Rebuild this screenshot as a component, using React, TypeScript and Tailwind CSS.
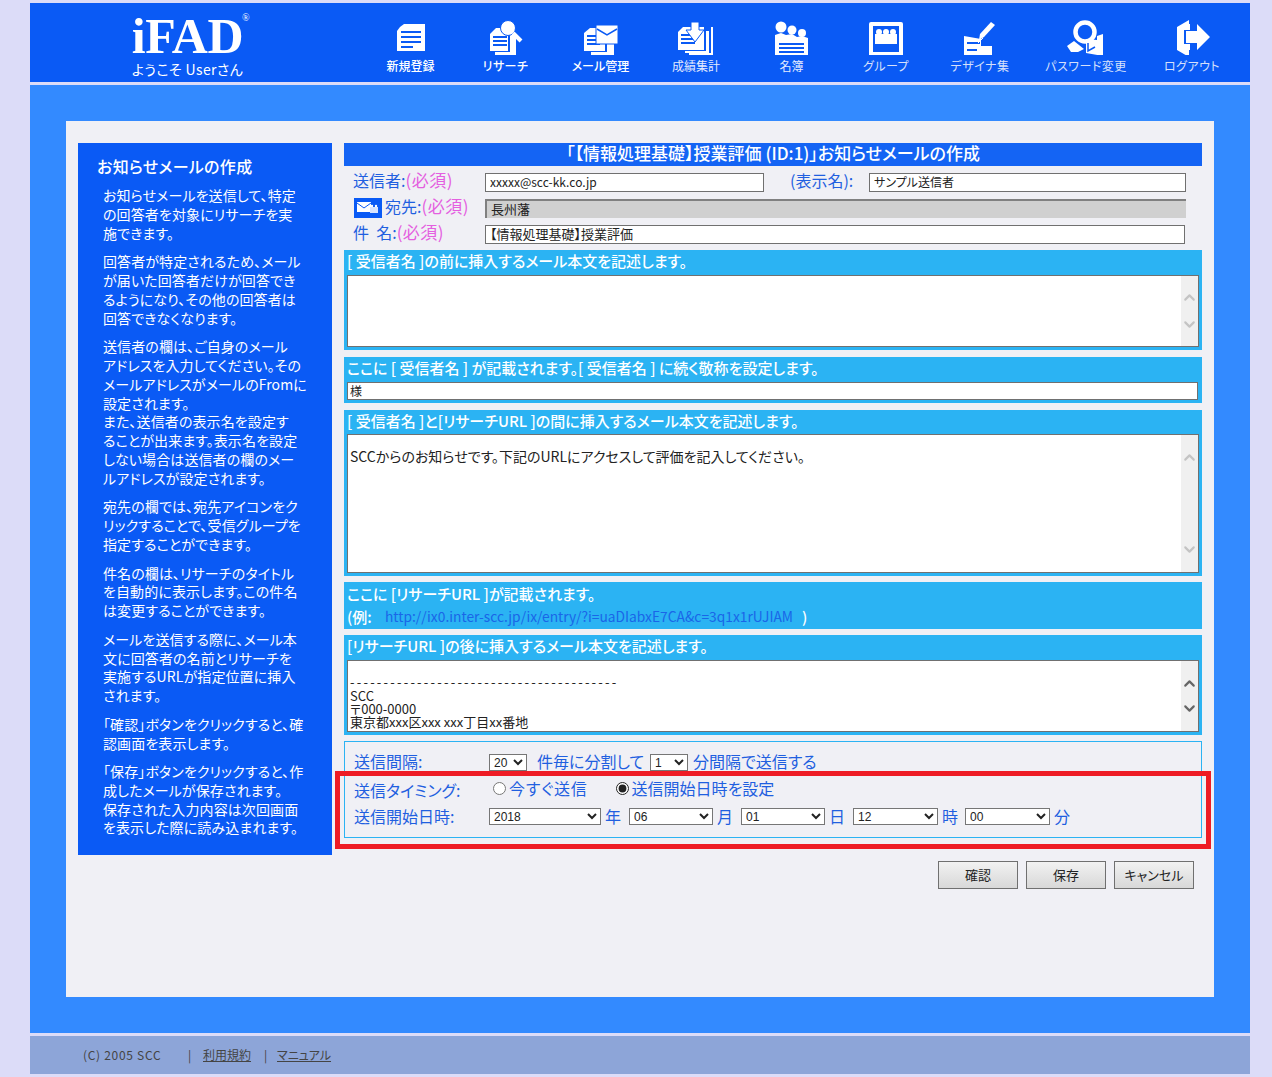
import React from "react";
import { ChevronUp, ChevronDown } from "lucide-react";

const font = { fontFamily: '"Noto Sans CJK JP", "Liberation Sans", sans-serif', fontFeatureSettings: '"palt"' };

const W = "#ffffff";
const B = "#0a5af5";

function Ic({ children }: { children: React.ReactNode }) {
  return (
    <svg width="44" height="36" viewBox="0 0 44 36" className="block">
      {children}
    </svg>
  );
}

const lines = (x: number, w: number, ys: number[], c = B, h = 2) =>
  ys.map((y) => <rect key={y} x={x} y={y} width={w} height={h} fill={c} />);

const icons: React.ReactNode[] = [
  <Ic>
    <path d="M11 8L15 5H36V32H8V12Z" fill={W} />
    {lines(12, 20, [12, 17, 22])}
    {lines(12, 12, [27])}
  </Ic>,
  <Ic>
    <path d="M6 15L12 9H24V32H6Z" fill={W} />
    <path d="M26 14H32V36H11V33H26Z" fill={W} />
    {lines(9, 14, [17, 21, 25])}
    <circle cx="24" cy="9" r="7.500" fill={W} stroke={B} strokeWidth="1" />
    <path d="M29 14L37 22" stroke={W} strokeWidth="4" />
  </Ic>,
  <Ic>
    <path d="M5 14L11 9H26V32H5Z" fill={W} />
    <path d="M28 20H35V36H12V33H28Z" fill={W} />
    {lines(8, 13, [16, 20, 24])}
    <rect x="17" y="6" width="22" height="19" fill={W} stroke={B} strokeWidth="1" />
    <path d="M18 10L28 16L38 10" fill="none" stroke={B} strokeWidth="1.500" />
  </Ic>,
  <Ic>
    <path d="M4 13L9 8H30V31H4Z" fill={W} />
    <path d="M32 12H35V34H11V32H32Z" fill={W} />
    <path d="M37 8H39V36H15V34H37Z" fill={W} />
    {lines(7, 14, [15, 19, 23])}
    <path d="M17 3H25V11H30L21 23L12 11H17Z" fill={W} stroke={B} strokeWidth="1" />
  </Ic>,
  <Ic>
    <circle cx="11" cy="8" r="5.500" fill={W} />
    <circle cx="22" cy="11" r="4.500" fill={W} />
    <circle cx="32" cy="14" r="4" fill={W} />
    <path d="M5 16L11 14L16 16L22 15L27 18L32 17L38 19V37H5Z" fill={W} />
    {lines(9, 25, [24, 28, 32])}
  </Ic>,
  <Ic>
    <rect x="5" y="3" width="34" height="35" rx="2" fill={W} />
    <rect x="9" y="7" width="26" height="26" fill={B} />
    <path d="M11 15H33V25H11Z" fill={W} />
    <circle cx="15" cy="13" r="3" fill={W} />
    <circle cx="22" cy="13" r="3" fill={W} />
    <circle cx="29" cy="13" r="3" fill={W} />
  </Ic>,
  <Ic>
    <path d="M6 17L23 20V27H34V36H6Z" fill={W} />
    {lines(9, 13, [23])}
    {lines(9, 10, [30])}
    <path d="M21 21L22 15L33 3L37 6L26 18Z" fill={W} />
    <path d="M20 24L25 19" stroke={W} strokeWidth="1" />
  </Ic>,
  <Ic>
    <circle cx="21" cy="13" r="9.500" fill="none" stroke={W} strokeWidth="4.500" />
    <path d="M3 27L10 22L20 30L14 33H7Z" fill={W} />
    <path d="M22 20V34L39 37V15L33 17V21Z" fill={W} />
    <path d="M24 24L24 32L31 28" stroke={B} strokeWidth="1.500" fill="none" />
  </Ic>,
  <Ic>
    <path d="M7 8L19 1V5H20V11H14V25H20V31H19V38L7 31Z" fill={W} />
    <path d="M16 12H27V5L40 18L27 31V24H16Z" fill={W} />
  </Ic>,
];

const nav = [
  { label: "新規登録", w: "w-[95px]", t: "text-white font-medium" },
  { label: "リサーチ", w: "w-[95px]", t: "text-white font-medium tracking-[0.4px]" },
  { label: "メール管理", w: "w-[95px]", t: "text-white font-medium" },
  { label: "成績集計", w: "w-[96px]", t: "text-[#e4ebff]" },
  { label: "名簿", w: "w-[95px]", t: "text-[#e4ebff]" },
  { label: "グループ", w: "w-[94px]", t: "text-[#d6e0fb] tracking-[0.5px]" },
  { label: "デザイナ集", w: "w-[94px]", t: "text-[#d6e0fb] tracking-[0.5px]" },
  { label: "パスワード変更", w: "w-[118px]", t: "text-[#d6e0fb] tracking-[0.5px]" },
  { label: "ログアウト", w: "w-[94px]", t: "text-[#d6e0fb] tracking-[0.5px]" },
];

const help: string[][] = [
  ["お知らせメールを送信して、特定", "の回答者を対象にリサーチを実", "施できます。"],
  ["回答者が特定されるため、メール", "が届いた回答者だけが回答でき", "るようになり、その他の回答者は", "回答できなくなります。"],
  ["送信者の欄は、ご自身のメール", "アドレスを入力してください。その", "メールアドレスがメールのFromに", "設定されます。", "また、送信者の表示名を設定す", "ることが出来ます。表示名を設定", "しない場合は送信者の欄のメー", "ルアドレスが設定されます。"],
  ["宛先の欄では、宛先アイコンをク", "リックすることで、受信グループを", "指定することができます。"],
  ["件名の欄は、リサーチのタイトル", "を自動的に表示します。この件名", "は変更することができます。"],
  ["メールを送信する際に、メール本", "文に回答者の名前とリサーチを", "実施するURLが指定位置に挿入", "されます。"],
  ["「確認」ボタンをクリックすると、確", "認画面を表示します。"],
  ["「保存」ボタンをクリックすると、作", "成したメールが保存されます。", "保存された入力内容は次回画面", "を表示した際に読み込まれます。"],
];

function Req() {
  return <span className="text-[#e45fe0] text-[17px] tracking-[0.5px]">(必須)</span>;
}

function Scroll({ dark, hClass }: { dark?: boolean; hClass: string }) {
  const c = dark ? "text-[#666666]" : "text-[#c4c4c4]";
  return (
    <div className={`w-[17px] bg-[#f0f0f0] flex flex-col items-center justify-between ${hClass}`}>
      <ChevronUp size={17} strokeWidth={3} className={c} />
      <ChevronDown size={17} strokeWidth={3} className={c} />
    </div>
  );
}

function Sel({ v, w }: { v: string; w: string }) {
  return (
    <select
      defaultValue={v}
      className={`${w} h-[17px] bg-white border border-[#767676] text-[12px] leading-[14px] text-[#222222] rounded-none`}
      style={{ fontFamily: '"Liberation Sans", sans-serif' }}
    >
      <option value={v}>{v}</option>
    </select>
  );
}

function Btn({ label }: { label: string }) {
  return (
    <button className="w-[80px] h-[28px] border border-[#707070] bg-gradient-to-b from-[#f2f2f2] to-[#d8d8d8] text-[13px] text-[#222222]">
      {label}
    </button>
  );
}

export default function App() {
  return (
    <div className="min-h-[1077px] bg-[#dcdcf8] px-[30px] pt-[3px]" style={font}>
      <div className="w-[1220px]">
        <header className="h-[79px] bg-[#0a5af5] flex text-white">
          <div className="w-[333px] flex flex-col items-center pr-[18px] relative">
            <div
              className="text-[50px] leading-[42px] font-bold mt-[12px] tracking-[-0.3px] relative"
              style={{ fontFamily: '"Liberation Serif", serif' }}
            >
              iFAD
              <span className="absolute right-[-6px] top-[-2px] text-[10px] leading-[10px] font-normal">®</span>
            </div>
            <div className="text-[14px] leading-[16px] mt-[4px] whitespace-nowrap tracking-[0.4px]">ようこそ Userさん</div>
          </div>
          <nav className="flex">
            {nav.map((n, i) => (
              <div key={n.label} className={`${n.w} flex flex-col items-center pt-[16px]`}>
                {icons[i]}
                <span className={`${n.t} text-[12px] leading-[16px] mt-[3px] whitespace-nowrap`}>{n.label}</span>
              </div>
            ))}
          </nav>
        </header>

        <main className="mt-[3px] h-[948px] bg-[#338aff] pt-[36px] px-[36px]">
          <div className="relative h-[876px] bg-[#f0f0f5] pt-[22px] px-[12px] flex gap-[12px] items-start">
            <aside className="w-[254px] h-[712px] bg-[#0a5af5] text-white pl-[19px] pt-[12px] shrink-0">
              <h2 className="text-[16px] leading-[22px] font-medium tracking-[0.3px]">お知らせメールの作成</h2>
              <div className="pl-[6px] mt-[9px] text-[14px] leading-[18.8px] whitespace-nowrap tracking-[0.1px]">
                {help.map((p, i) => (
                  <p key={i} className="mb-[9.800px]">
                    {p.map((l, j) => (
                      <span key={j} className="block">{l}</span>
                    ))}
                  </p>
                ))}
              </div>
            </aside>

            <section className="w-[858px]">
              <h1 className="h-[23px] bg-[#1464f4] text-white text-center text-[17px] leading-[19px] font-medium">
                「【情報処理基礎】授業評価 (ID:1)」お知らせメールの作成
              </h1>

              <div className="text-[#1f5fe0] text-[16px] leading-[22px]">
                <div className="flex items-center h-[26px] mt-[3px]">
                  <div className="w-[141px] pl-[9px] pb-[5px] whitespace-nowrap">送信者:<Req /></div>
                  <input readOnly value="xxxxx@scc-kk.co.jp" className="w-[279px] h-[19px] bg-white border border-[#707070] text-[12px] px-[4px] text-[#222222]" />
                  <div className="w-[105px] pl-[26px] pb-[5px] whitespace-nowrap">(表示名):</div>
                  <input readOnly value="サンプル送信者" className="w-[317px] h-[19px] bg-white border border-[#707070] text-[12px] px-[4px] text-[#222222]" />
                </div>
                <div className="flex items-center h-[26px]">
                  <div className="w-[141px] pl-[10px] flex items-center gap-[3px] whitespace-nowrap">
                    <span className="w-[28px] h-[20px] bg-[#0a5af5] flex items-center justify-center">
                      <svg width="22" height="12" viewBox="0 0 22 12">
                        <rect x="0" y="0" width="14" height="10" fill="#ffffff" />
                        <path d="M0 1L7 6L14 1" stroke="#0a5af5" fill="none" />
                        <rect x="13" y="5" width="8" height="6" fill="#d8e4ff" />
                        <circle cx="15" cy="4" r="1.200" fill="#ffffff" />
                        <circle cx="19" cy="4" r="1.200" fill="#ffffff" />
                      </svg>
                    </span>
                    <span className="pb-[5px]">宛先:<Req /></span>
                  </div>
                  <div className="w-[701px] h-[19px] bg-[#d0d0d0] border-2 border-r-0 border-b-0 border-[#808080] text-[13px] leading-[16px] pl-[4px] text-[#222222]">長州藩</div>
                </div>
                <div className="flex items-center h-[26px]">
                  <div className="w-[141px] pl-[9px] pb-[5px] whitespace-nowrap">件&nbsp;&nbsp;名:<Req /></div>
                  <input readOnly value="【情報処理基礎】授業評価" className="w-[700px] h-[19px] bg-white border border-[#707070] text-[13px] px-[4px] text-[#222222]" />
                </div>
              </div>

              <Sky top="mt-[3px]" label="[ 受信者名 ]の前に挿入するメール本文を記述します。" labelH="h-[25px]">
                <div className="mx-[3px] h-[72px] bg-white border border-[#707070] flex justify-between">
                  <div />
                  <Scroll hClass="h-[70px] py-[13px]" />
                </div>
              </Sky>

              <Sky top="mt-[7px]" label="ここに [ 受信者名 ] が記載されます。[ 受信者名 ] に続く敬称を設定します。" labelH="h-[25px]">
                <input readOnly value="様" className="block ml-[3px] w-[851px] h-[18px] bg-white border border-[#707070] text-[12px] px-[2px] text-[#222222]" />
              </Sky>

              <Sky top="mt-[7px]" label="[ 受信者名 ]と[リサーチURL ]の間に挿入するメール本文を記述します。" labelH="h-[24px]">
                <div className="mx-[3px] h-[139px] bg-white border border-[#707070] flex justify-between">
                  <p className="text-[14px] leading-[14px] pt-[14px] pl-[2px] text-[#222222]">
                    SCCからのお知らせです。下記のURLにアクセスして評価を記入してください。
                  </p>
                  <Scroll hClass="h-[137px] py-[14px]" />
                </div>
              </Sky>

              <div className="mt-[6px] h-[47px] bg-[#2bb3f3] text-white text-[15px] leading-[23px] pl-[3px] font-medium">
                <div>ここに [リサーチURL ]が記載されます。</div>
                <div className="whitespace-nowrap flex">
                  <span className="w-[38px]">(例:</span>
                  <span className="text-[13.800px] font-normal text-[#1a66e8] w-[417px]">http://ix0.inter-scc.jp/ix/entry/?i=uaDIabxE7CA&amp;c=3q1x1rUJIAM</span>
                  <span>)</span>
                </div>
              </div>

              <Sky top="mt-[6px]" label="[リサーチURL ]の後に挿入するメール本文を記述します。" labelH="h-[25px]">
                <div className="mx-[3px] h-[72px] bg-white border border-[#707070] flex justify-between">
                  <div className="text-[13px] leading-[13px] pt-[14px] pl-[2px] text-[#222222] whitespace-nowrap overflow-hidden">
                    <div className="tracking-[2.200px] mb-[1px]">----------------------------------------</div>
                    <div>SCC</div>
                    <div>〒000-0000</div>
                    <div>東京都xxx区xxx xxx丁目xx番地</div>
                  </div>
                  <Scroll dark hClass="h-[70px] py-[14px]" />
                </div>
              </Sky>

              <div className="mt-[6px] h-[97px] border border-[#2bb3f3] text-[#1f5fe0] text-[16px] leading-[22px] pl-[9px] pt-[8px]">
                <div className="flex items-center h-[22px]">
                  <div className="w-[135px]">送信間隔:</div>
                  <Sel v="20" w="w-[38px] mt-[2px]" />
                  <span className="ml-[10px] w-[113px] whitespace-nowrap">件毎に分割して</span>
                  <Sel v="1" w="w-[38px] mt-[2px]" />
                  <span className="ml-[5px] whitespace-nowrap">分間隔で送信する</span>
                </div>
                <div className="flex items-start h-[26px] mt-[5px]">
                  <div className="w-[139px] pt-[2px] whitespace-nowrap">送信タイミング:</div>
                  <label className="flex items-center tracking-[0.8px]">
                    <input type="radio" name="t" readOnly className="w-[13px] h-[13px] m-0 mr-[3px]" />
                    今すぐ送信
                  </label>
                  <label className="flex items-center ml-[28px]">
                    <input type="radio" name="t" defaultChecked className="w-[13px] h-[13px] m-0 mr-[3px] accent-[#222222]" />
                    送信開始日時を設定
                  </label>
                </div>
                <div className="flex items-center h-[22px] mt-[2px]">
                  <div className="w-[135px] whitespace-nowrap">送信開始日時:</div>
                  <Sel v="2018" w="w-[112px]" />
                  <span className="w-[28px] pl-[4px]">年</span>
                  <Sel v="06" w="w-[84px]" />
                  <span className="w-[28px] pl-[4px]">月</span>
                  <Sel v="01" w="w-[84px]" />
                  <span className="w-[28px] pl-[4px]">日</span>
                  <Sel v="12" w="w-[85px]" />
                  <span className="w-[27px] pl-[4px]">時</span>
                  <Sel v="00" w="w-[85px]" />
                  <span className="ml-[4px]">分</span>
                </div>
              </div>

              <div className="mt-[23px] flex justify-end gap-[8px] pr-[8px]">
                <Btn label="確認" />
                <Btn label="保存" />
                <Btn label="キャンセル" />
              </div>
            </section>

            <div className="absolute left-[269px] top-[650px] w-[876px] h-[78px] border-[5px] border-[#ee1c25] pointer-events-none" />
          </div>
        </main>

        <footer className="mt-[3px] h-[38px] bg-[#8da5d8] text-[#444444] text-[12px] leading-[38px] pl-[53px] flex whitespace-nowrap">
          <span className="w-[105px] tracking-[0.7px]">(C) 2005 SCC</span>
          <span className="w-[15px]">|</span>
          <a className="underline w-[61px]">利用規約</a>
          <span className="w-[13px]">|</span>
          <a className="underline">マニュアル</a>
        </footer>
      </div>
    </div>
  );
}

function Sky({ top, label, labelH, children }: { top: string; label: string; labelH: string; children: React.ReactNode }) {
  return (
    <div className={`${top} bg-[#2bb3f3] pb-[3px]`}>
      <div className={`${labelH} text-white text-[15px] font-medium leading-[22px] pl-[3px] whitespace-nowrap`}>{label}</div>
      {children}
    </div>
  );
}
